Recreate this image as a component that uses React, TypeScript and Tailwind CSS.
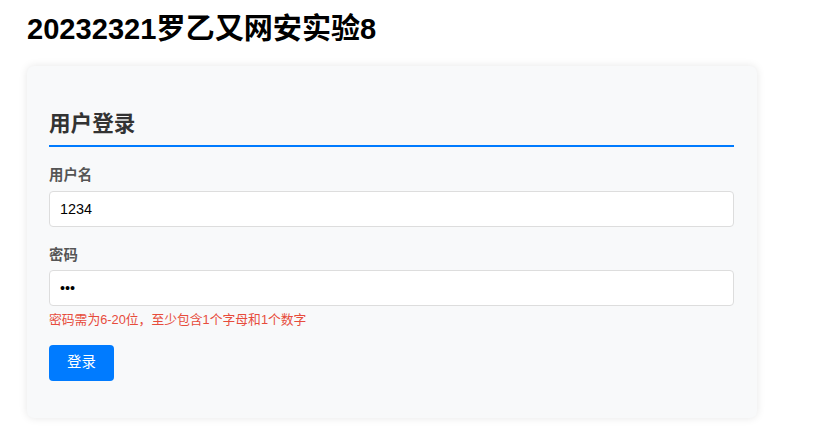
import { useState } from "react";

const font = "font-['Liberation_Sans','Noto_Sans_CJK_SC',sans-serif]";

// Login page with a simple validation hint
const App = () => {
  const [username, setUsername] = useState("1234");
  const [password, setPassword] = useState("abc");

  return (
    <div className={`min-h-[440px] bg-white px-[27px] ${font}`}>
      <h1 className="pt-[13px] text-[29.1px] leading-[32px] font-bold text-black">
        20232321罗乙又网安实验8
      </h1>

      {/* Carte de connexion */}
      <div className="mt-[21px] w-[730px] rounded-[7px] bg-[#f8f9fa] pt-[45px] pr-[23px] pb-[37px] pl-[22px] shadow-[0_0_9px_rgba(0,0,0,0.1)]">
        <h2 className="border-b-2 border-[#007bff] pb-[8px] text-[21.6px] leading-[26px] font-bold text-[#333]">
          用户登录
        </h2>

        <label className="mt-[19px] mb-[7px] block text-[14.4px] leading-[18px] font-bold text-[#555]">
          用户名
        </label>
        <input
          className="block h-[36px] w-full rounded-[4px] border border-[#ddd] bg-white px-[10px] text-[14.4px] text-black outline-none"
          value={username}
          onChange={(e) => setUsername(e.target.value)}
        />

        <label className="mt-[19px] mb-[6px] block text-[14.4px] leading-[18px] font-bold text-[#555]">
          密码
        </label>
        <input
          type="password"
          className="block h-[36px] w-full rounded-[4px] border border-[#ddd] bg-white px-[10px] text-[14.4px] text-black outline-none"
          value={password}
          onChange={(e) => setPassword(e.target.value)}
        />
        <p className="mt-[6px] text-[12.8px] leading-[16px] text-[#e74c3c]">
          密码需为6-20位，至少包含1个字母和1个数字
        </p>

        <button className="mt-[17px] h-[36px] w-[65px] rounded-[4px] bg-[#007bff] text-[14.4px] text-white">
          登录
        </button>
      </div>
    </div>
  );
};

export default App;
